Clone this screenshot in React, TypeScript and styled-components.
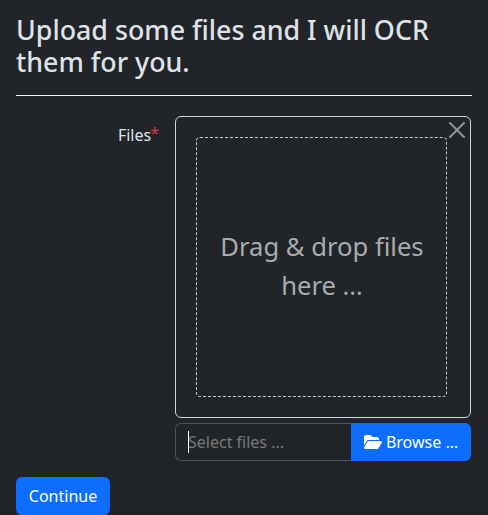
import React from "react";
import styled, { createGlobalStyle } from "styled-components";
import { FaFolderOpen } from "react-icons/fa6";

const GlobalStyle = createGlobalStyle`
  *, *::before, *::after { box-sizing: border-box; }
  html { height: 100%; overflow: hidden; }
  body {
    margin: 0;
    background: #212529;
    color: #dee2e6;
    font: 400 16px/24px "Noto Sans", sans-serif;
  }
`;

const Page = styled.main`
  width: 488px;
  height: 515px;
  padding: 14px 16px 0;
  overflow: hidden;
`;

const Title = styled.h2`
  margin: 0;
  font-size: 26.8px;
  font-weight: 500;
  line-height: 32px;
`;

const Rule = styled.hr`
  margin: 17px 0 20px;
  border: 0;
  border-top: 1px solid #f1f2f3;
`;

const FieldRow = styled.div`
  display: grid;
  grid-template-columns: 143px 296px;
  column-gap: 16px;
`;

const Label = styled.label`
  display: flex;
  justify-content: flex-end;
  padding-top: 7px;
`;

const Required = styled.span`
  margin-left: -1px;
  color: #dc3545;
  line-height: 20px;
`;

const FileInput = styled.div`
  display: flex;
  flex-direction: column;
  gap: 5px;
`;

const Preview = styled.div`
  position: relative;
  height: 302px;
  padding: 20px 23px 20px 20px;
  border: 1px solid #ced4da;
  border-radius: 6px;
`;

const CloseButton = styled.button`
  position: absolute;
  top: 5px;
  right: 5px;
  display: flex;
  width: 16px;
  height: 16px;
  padding: 0;
  border: 0;
  background: none;
  color: #fff;
  opacity: 0.5;
`;

const DropZone = styled.div`
  display: flex;
  align-items: center;
  justify-content: center;
  width: 251px;
  height: 260px;
  padding: 0 19px 2px 20px;
  border: 1px dashed #c4c7ca;
  border-radius: 4px;
  color: #a9acae;
  font-size: 25.6px;
  line-height: 39px;
  text-align: center;
`;

const InputGroup = styled.div`
  display: flex;
  height: 38px;
`;

const Caption = styled.div`
  display: flex;
  align-items: center;
  flex: 1;
  padding-left: 12px;
  border: 1px solid #495057;
  border-right: 0;
  border-radius: 6px 0 0 6px;
  color: #777777;
`;

const Caret = styled.span`
  width: 1px;
  height: 22px;
  margin-right: -1px;
  background: #fff;
`;

const Button = styled.button<{ $attached?: boolean }>`
  display: inline-flex;
  align-items: center;
  justify-content: center;
  gap: 4px;
  width: ${({ $attached }) => ($attached ? "120px" : "94px")};
  height: 38px;
  padding: 0;
  border: 0;
  border-radius: ${({ $attached }) => ($attached ? "0 6px 6px 0" : "6px")};
  background: #0d6efd;
  color: #fff;
  font: inherit;
  white-space: nowrap;
`;

const FolderIcon = styled(FaFolderOpen)`
  width: 18px;
  height: 16px;
`;

const Actions = styled.div`
  display: flex;
  margin-top: 16px;
`;

export default function App() {
  return (
    <>
      <GlobalStyle />
      <Page>
        <Title>Upload some files and I will OCR them for you.</Title>
        <Rule />
        <FieldRow>
          <Label>
            Files<Required>*</Required>
          </Label>
          <FileInput>
            <Preview>
              <CloseButton aria-label="Close">
                <svg width="16" height="16" viewBox="0 0 16 16" fill="currentColor">
                  <path d="M.293.293a1 1 0 0 1 1.414 0L8 6.586 14.293.293a1 1 0 1 1 1.414 1.414L9.414 8l6.293 6.293a1 1 0 0 1-1.414 1.414L8 9.414l-6.293 6.293a1 1 0 0 1-1.414-1.414L6.586 8 .293 1.707a1 1 0 0 1 0-1.414" />
                </svg>
              </CloseButton>
              <DropZone>Drag &amp; drop files here …</DropZone>
            </Preview>
            <InputGroup>
              <Caption>
                <Caret />
                Select files ...
              </Caption>
              <Button $attached>
                <FolderIcon />
                Browse …
              </Button>
            </InputGroup>
          </FileInput>
        </FieldRow>
        <Actions>
          <Button>Continue</Button>
        </Actions>
      </Page>
    </>
  );
}
